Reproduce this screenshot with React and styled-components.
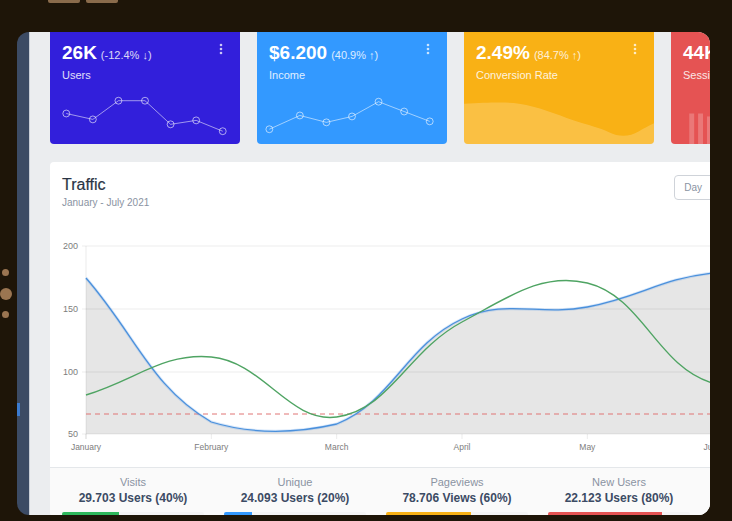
import React from 'react'
import styled, { createGlobalStyle } from 'styled-components'

const GlobalStyle = createGlobalStyle`
	html, body {
		margin: 0;
		padding: 0;
		background: #1e1508;
	}
	body {
		font-family: 'Liberation Sans', Arial, sans-serif;
	}
`

const Frame = styled.div`
	width: 732px;
	height: 521px;
	overflow: hidden;
	background: #1e1508;
`

const TopStrip = styled.div`
	height: 32px;
	display: flex;
	gap: 6px;
	padding-left: 48px;
	box-sizing: border-box;
`

const Tab = styled.div`
	width: 32px;
	height: 3px;
	background: #8a6b4b;
	border-radius: 0 0 2px 2px;
`

const Body = styled.div`
	display: flex;
`

const Rail = styled.div`
	width: 17px;
	flex-shrink: 0;
`

const DotStack = styled.div`
	width: 11px;
	display: flex;
	flex-direction: column;
	align-items: center;
	gap: 11.5px;
	padding-top: 237px;
`

const Dot = styled.div`
	width: ${(p) => (p.big ? 12 : 7)}px;
	height: ${(p) => (p.big ? 12 : 7)}px;
	border-radius: 50%;
	background: #9a7551;
`

const Screen = styled.div`
	width: 693px;
	height: 483px;
	border-radius: 12px;
	overflow: hidden;
	display: flex;
	flex-shrink: 0;
`

const SideStrip = styled.div`
	width: 13px;
	flex-shrink: 0;
	background: #3c4b64;
	border-right: 1px solid #c9ced6;
	box-sizing: border-box;
	padding-top: 371px;
`

const NavMark = styled.div`
	width: 3px;
	height: 13px;
	background: #3b7bd0;
`

const Main = styled.div`
	flex: 1;
	background: #ebedef;
	overflow: hidden;
	padding-left: 20px;
`

const Scroll = styled.div`
	width: 810px;
	margin-top: -8px;
`

const CardRow = styled.div`
	display: grid;
	grid-template-columns: repeat(4, 190px);
	gap: 17px;
`

const Widget = styled.div`
	height: 120px;
	box-sizing: border-box;
	padding: 18px 12px 0;
	border-radius: 4px;
	background: ${(p) => p.color};
	color: #fff;
	display: flex;
	flex-direction: column;
	overflow: hidden;
`

const WidgetHead = styled.div`
	display: flex;
	justify-content: space-between;
	align-items: flex-start;
`

const Value = styled.div`
	font-size: 19px;
	line-height: 22px;
	font-weight: bold;
	white-space: nowrap;
`

const Delta = styled.span`
	font-size: 11px;
	font-weight: normal;
	margin-left: 4px;
	opacity: 0.82;
`

const WidgetLabel = styled.div`
	font-size: 11px;
	line-height: 16px;
	margin-top: 1px;
	opacity: 0.85;
	white-space: nowrap;
`

const Spark = styled.svg`
	display: block;
	margin: auto -12px 0;
	width: 190px;
	height: 62px;
`

const Kebab = styled.svg`
	display: block;
	width: 14px;
	height: 14px;
	flex-shrink: 0;
`

const TrafficCard = styled.div`
	margin-top: 18px;
	background: #fff;
	border-radius: 4px;
	overflow: hidden;
`

const TrafficBody = styled.div`
	padding: 13px 12px 5px;
`

const TrafficHead = styled.div`
	display: flex;
	justify-content: space-between;
	align-items: flex-start;
`

const Title = styled.div`
	font-size: 16px;
	line-height: 20px;
	color: #2a3444;
	-webkit-text-stroke: 0.2px #2a3444;
`

const Subtitle = styled.div`
	font-size: 10px;
	line-height: 14px;
	margin-top: 1px;
	color: #8a93a2;
`

const Tools = styled.div`
	display: flex;
	gap: 10px;
`

const ButtonGroup = styled.div`
	display: flex;
`

const GroupButton = styled.button`
	height: 25px;
	padding: 0 9px;
	font-family: inherit;
	font-size: 10px;
	color: ${(p) => (p.active ? '#fff' : '#8a93a2')};
	background: ${(p) => (p.active ? '#8a93a2' : '#fff')};
	border: 1px solid #cfd3d9;
	margin-left: -1px;
	border-radius: 0;
	&:first-child {
		border-radius: 4px 0 0 4px;
	}
	&:last-child {
		border-radius: 0 4px 4px 0;
	}
`

const IconButton = styled.button`
	width: 40px;
	height: 25px;
	border: 0;
	border-radius: 4px;
	background: #321fdb;
`

const Chart = styled.svg`
	display: block;
	margin-top: 26px;
	width: 786px;
	height: 226px;
	font-family: 'Liberation Sans', Arial, sans-serif;
`

const Footer = styled.div`
	display: grid;
	grid-template-columns: repeat(5, 162px);
	padding: 7px 2px 0;
	border-top: 1px solid #e4e7ea;
	background: #fafafa;
`

const Stat = styled.div`
	padding: 0 10px;
	text-align: center;
`

const StatLabel = styled.div`
	font-size: 11px;
	line-height: 15px;
	color: #8a93a2;
`

const StatValue = styled.div`
	font-size: 12px;
	line-height: 16px;
	font-weight: bold;
	color: #3c4b64;
	white-space: nowrap;
`

const Track = styled.div`
	margin-top: 6px;
	height: 4px;
	background: #f4f4f5;
	border-radius: 2px;
	overflow: hidden;
`

const Fill = styled.div`
	height: 100%;
	background: ${(p) => p.color};
`

// chart.js style bezier with control points capped to the plot area
const PLOT = { left: 24, right: 776, top: 10, bottom: 198 }
const xAt = (i) => PLOT.left + i * ((PLOT.right - PLOT.left) / 6)
const cap = (v, a, b) => Math.max(a, Math.min(b, v))

function spline(values, t = 0.4) {
	const pts = values.map((v, i) => [xAt(i), v])
	const cps = pts.map((p, i) => {
		const prev = pts[i - 1] || p
		const next = pts[i + 1] || p
		const d01 = Math.hypot(p[0] - prev[0], p[1] - prev[1])
		const d12 = Math.hypot(next[0] - p[0], next[1] - p[1])
		const s = d01 + d12 || 1
		const fa = (t * d01) / s
		const fb = (t * d12) / s
		const c = (x, y) => [cap(x, PLOT.left, PLOT.right), cap(y, PLOT.top, PLOT.bottom)]
		return {
			prev: c(p[0] - fa * (next[0] - prev[0]), p[1] - fa * (next[1] - prev[1])),
			next: c(p[0] + fb * (next[0] - prev[0]), p[1] + fb * (next[1] - prev[1]))
		}
	})
	let d = `M${pts[0][0]},${pts[0][1]}`
	for (let i = 1; i < pts.length; i++) {
		const a = cps[i - 1].next
		const b = cps[i].prev
		d += ` C${a[0].toFixed(1)},${a[1].toFixed(1)} ${b[0].toFixed(1)},${b[1].toFixed(1)} ${pts[i][0].toFixed(1)},${pts[i][1]}`
	}
	return d
}

const blue = [42, 186, 188, 83, 71, 37, 45]
const green = [159, 121, 181, 86, 47, 147, 120]
const months = ['January', 'February', 'March', 'April', 'May', 'June', 'July']
const yTicks = [
	{ label: '200', y: 10 },
	{ label: '150', y: 73 },
	{ label: '100', y: 136 },
	{ label: '50', y: 198 }
]

function TrafficChart() {
	const bluePath = spline(blue)
	const area = `${bluePath} L${PLOT.right},${PLOT.bottom} L${PLOT.left},${PLOT.bottom} Z`
	return (
		<Chart viewBox='0 0 786 226'>
			<path d={area} fill='#e6e6e6' />
			{yTicks.map((t) => (
				<g key={t.label}>
					<line x1={PLOT.left - 4} x2={PLOT.right} y1={t.y} y2={t.y} stroke='rgba(0,0,0,0.07)' />
					<text x='16' y={t.y + 3} fontSize='9' fill='#7d7d7d' textAnchor='end'>
						{t.label}
					</text>
				</g>
			))}
			<line x1={PLOT.left} x2={PLOT.left} y1={PLOT.top} y2={PLOT.bottom + 5} stroke='rgba(0,0,0,0.08)' />
			{months.map((m, i) => (
				<g key={m}>
					<line x1={xAt(i)} x2={xAt(i)} y1={PLOT.bottom} y2={PLOT.bottom + 5} stroke='rgba(0,0,0,0.08)' />
					<text x={xAt(i)} y='214' fontSize='8.5' fill='#7d7d7d' textAnchor='middle'>
						{m}
					</text>
				</g>
			))}
			<line
				x1={PLOT.left}
				x2={PLOT.right}
				y1='178'
				y2='178'
				stroke='#e07474'
				strokeWidth='1'
				strokeDasharray='5 4'
			/>
			<path d={bluePath} fill='none' stroke='rgba(80,150,230,0.22)' strokeWidth='3' />
			<path d={bluePath} fill='none' stroke='#4a90dc' strokeWidth='1.3' />
			<path d={spline(green)} fill='none' stroke='#4fa463' strokeWidth='1.4' />
		</Chart>
	)
}

const KebabIcon = () => (
	<Kebab viewBox='0 0 14 14'>
		<circle cx='7' cy='3' r='1.3' fill='rgba(255,255,255,0.75)' />
		<circle cx='7' cy='7' r='1.3' fill='rgba(255,255,255,0.75)' />
		<circle cx='7' cy='11' r='1.3' fill='rgba(255,255,255,0.75)' />
	</Kebab>
)

function LineSpark({ points }) {
	const d = points.map((p, i) => `${i ? 'L' : 'M'}${p[0]},${p[1]}`).join(' ')
	return (
		<Spark viewBox='0 0 190 62'>
			<path d={d} fill='none' stroke='rgba(255,255,255,0.55)' strokeWidth='1' />
			{points.map((p, i) => (
				<circle key={i} cx={p[0]} cy={p[1]} r='3.5' fill='none' stroke='rgba(255,255,255,0.6)' strokeWidth='1' />
			))}
		</Spark>
	)
}

const AreaSpark = () => (
	<Spark viewBox='0 0 190 62' preserveAspectRatio='none'>
		<path
			d='M0,21 C25,20 40,19 55,21 C75,24 90,31 110,38 C125,43 135,45 145,50 C155,55 165,55 175,49 C182,45 186,43 190,41 L190,62 L0,62 Z'
			fill='rgba(255,255,255,0.2)'
		/>
	</Spark>
)

const BarSpark = () => (
	<Spark viewBox='0 0 190 62'>
		{[31, 31, 28, 36, 24, 33, 29, 38, 26, 34, 30, 36, 27, 32, 35, 28, 33, 30].map((h, i) => (
			<rect key={i} x={17 + i * 9} y={62 - h} width='5' height={h} fill='rgba(255,255,255,0.22)' />
		))}
	</Spark>
)

const widgets = [
	{
		color: '#321fdb',
		value: '26K',
		delta: '(-12.4% ↓)',
		label: 'Users',
		chart: <LineSpark points={[[15, 31], [42, 37], [68, 18], [95, 18], [121, 42], [147, 38], [174, 49]]} />
	},
	{
		color: '#3399ff',
		value: '$6.200',
		delta: '(40.9% ↑)',
		label: 'Income',
		chart: <LineSpark points={[[11, 47], [42, 33], [69, 40], [95, 34], [122, 19], [148, 29], [174, 39]]} />
	},
	{ color: '#f9b115', value: '2.49%', delta: '(84.7% ↑)', label: 'Conversion Rate', chart: <AreaSpark /> },
	{ color: '#e55353', value: '44K', delta: '(-23.6% ↓)', label: 'Sessions', chart: <BarSpark /> }
]

const stats = [
	{ label: 'Visits', value: '29.703 Users (40%)', pct: 40, color: '#2eb85c' },
	{ label: 'Unique', value: '24.093 Users (20%)', pct: 20, color: '#39f' },
	{ label: 'Pageviews', value: '78.706 Views (60%)', pct: 60, color: '#f9b115' },
	{ label: 'New Users', value: '22.123 Users (80%)', pct: 80, color: '#e55353' },
	{ label: 'Bounce Rate', value: 'Average Rate (40.15%)', pct: 40, color: '#321fdb' }
]

export default function App() {
	return (
		<Frame>
			<GlobalStyle />
			<TopStrip>
				<Tab />
				<Tab />
			</TopStrip>
			<Body>
				<Rail>
					<DotStack>
						<Dot />
						<Dot big />
						<Dot />
					</DotStack>
				</Rail>
				<Screen>
					<SideStrip>
						<NavMark />
					</SideStrip>
					<Main>
						<Scroll>
							<CardRow>
								{widgets.map((w) => (
									<Widget key={w.label} color={w.color}>
										<WidgetHead>
											<Value>
												{w.value}
												<Delta>{w.delta}</Delta>
											</Value>
											<KebabIcon />
										</WidgetHead>
										<WidgetLabel>{w.label}</WidgetLabel>
										{w.chart}
									</Widget>
								))}
							</CardRow>
							<TrafficCard>
								<TrafficBody>
									<TrafficHead>
										<div>
											<Title>Traffic</Title>
											<Subtitle>January - July 2021</Subtitle>
										</div>
										<Tools>
											<ButtonGroup>
												<GroupButton>Day</GroupButton>
												<GroupButton active>Month</GroupButton>
												<GroupButton>Year</GroupButton>
											</ButtonGroup>
											<IconButton />
										</Tools>
									</TrafficHead>
									<TrafficChart />
								</TrafficBody>
								<Footer>
									{stats.map((s) => (
										<Stat key={s.label}>
											<StatLabel>{s.label}</StatLabel>
											<StatValue>{s.value}</StatValue>
											<Track>
												<Fill color={s.color} style={{ width: `${s.pct}%` }} />
											</Track>
										</Stat>
									))}
								</Footer>
							</TrafficCard>
						</Scroll>
					</Main>
				</Screen>
			</Body>
		</Frame>
	)
}
